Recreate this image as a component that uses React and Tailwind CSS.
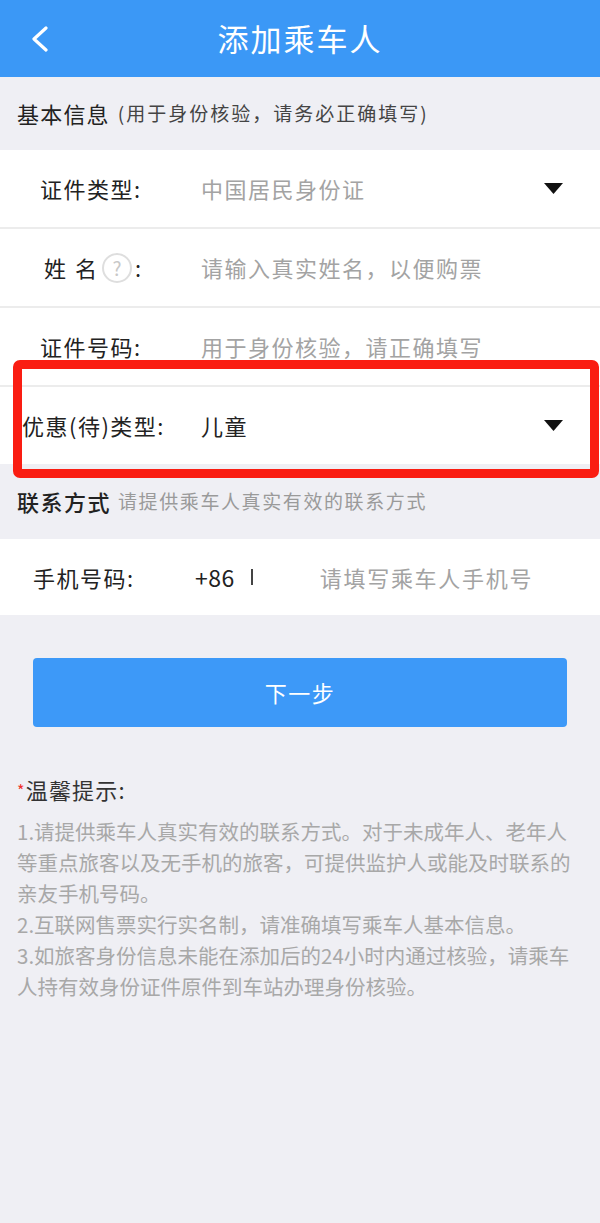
import React from "react";

const font = { fontFamily: '"Noto Sans CJK SC", "Noto Sans", sans-serif' };

const Arrow = () => (
  <svg width="19" height="11" viewBox="0 0 19 11" className="shrink-0">
    <path d="M0 0 L19 0 L9.5 11 Z" fill="#111" />
  </svg>
);

const Row = ({ label, value, valueDark, arrow, labelPad = "pl-[40px]", labelW = "w-[161px]" }) => (
  <div className={`h-[77px] bg-white flex items-center pr-[37px] ${labelPad}`}>
    <div className={`${labelW} shrink-0 text-[22px] tracking-[1.5px] text-[#222]`}>{label}</div>
    <div className={`flex-1 text-[22px] tracking-[1.5px] ${valueDark ? "text-[#222]" : "text-[#a3a3a3]"}`}>{value}</div>
    {arrow && <Arrow />}
  </div>
);

const tips = [
  "1.请提供乘车人真实有效的联系方式。对于未成年人、老年人等重点旅客以及无手机的旅客，可提供监护人或能及时联系的亲友手机号码。",
  "2.互联网售票实行实名制，请准确填写乘车人基本信息。",
  "3.如旅客身份信息未能在添加后的24小时内通过核验，请乘车人持有效身份证件原件到车站办理身份核验。",
];

export default function App() {
  return (
    <div style={font} className="min-h-[1223px] bg-[#efeff4] w-[600px]">
      {/* header */}
      <div className="h-[77px] bg-[#3b98f6] grid grid-cols-[90px_1fr_90px] items-center">
        <div className="pl-[30px] flex items-center">
          <svg width="22" height="26" viewBox="0 0 22 26">
            <path d="M16 2 L4 13 L16 24" fill="none" stroke="#fff" strokeWidth="3.2" strokeLinecap="round" strokeLinejoin="round" />
          </svg>
        </div>
        <div className="text-center text-white text-[31px] tracking-[2px]">添加乘车人</div>
        <div />
      </div>

      {/* basic info header */}
      <div className="h-[73px] flex items-center px-[17px]">
        <span className="text-[22px] tracking-[1.2px] text-[#222]">基本信息</span>
        <span className="text-[19px] tracking-[2px] text-[#444] ml-[8px]">(用于身份核验，请务必正确填写)</span>
      </div>

      <Row label="证件类型:" value="中国居民身份证" arrow />
      <div className="h-[2px] bg-[#ececec]" />
      <div className="h-[77px] bg-white flex items-center pl-[44px] pr-[37px]">
        <div className="w-[157px] shrink-0 flex items-center text-[22px] text-[#222]">
          <span>姓</span>
          <span className="ml-[9px]">名</span>
          <span className="ml-[5px] w-[30px] h-[30px] rounded-full border-2 border-[#dedede] flex items-center justify-center text-[19px] text-[#c8c8c8] leading-none">?</span>
          <span className="ml-[3px]">:</span>
        </div>
        <div className="flex-1 text-[22px] tracking-[1.5px] text-[#a3a3a3]">请输入真实姓名，以便购票</div>
      </div>
      <div className="h-[2px] bg-[#ececec]" />
      <Row label="证件号码:" value="用于身份核验，请正确填写" />
      <div className="h-[2px] bg-[#ececec]" />

      <div className="relative">
        <Row label="优惠(待)类型:" value="儿童" valueDark arrow labelPad="pl-[22px]" labelW="w-[179px]" />
        <div className="absolute top-[-27px] bottom-[-14px] left-[13px] right-[1px] border-[9px] border-[#fa1d12] rounded-[7px] pointer-events-none" />
      </div>

      {/* contact header */}
      <div className="h-[75px] flex items-center px-[17px]">
        <span className="text-[22px] tracking-[1.5px] text-[#222] font-medium">联系方式</span>
        <span className="text-[19px] tracking-[1.6px] text-[#9a9a9a] ml-[7px]">请提供乘车人真实有效的联系方式</span>
      </div>

      <div className="h-[76px] bg-white flex items-center pl-[33px]">
        <div className="w-[162px] shrink-0 text-[22px] tracking-[1.5px] text-[#222]">手机号码:</div>
        <div className="text-[23px] tracking-[0.5px] text-[#222]">+86</div>
        <div className="ml-[16px] w-[2px] h-[16px] bg-[#444]" />
        <div className="ml-[67px] text-[22px] tracking-[1.7px] text-[#a3a3a3]">请填写乘车人手机号</div>
      </div>

      <div className="px-[33px] pt-[43px]">
        <button className="w-full h-[69px] rounded-[4px] bg-[#3d99f8] text-white text-[22px] tracking-[1.5px]">下一步</button>
      </div>

      {/* tips */}
      <div className="px-[17px] pt-[46px]">
        <div className="text-[22px] tracking-[1.2px] text-[#333]">
          <span className="text-[#f0302a] text-[16px] align-[2px]">*</span>温馨提示:
        </div>
        <div className="mt-[10px] text-[20.5px] leading-[31px] text-[#a8a8a8]">
          {tips.map((t) => (
            <p key={t}>{t}</p>
          ))}
        </div>
      </div>
    </div>
  );
}
